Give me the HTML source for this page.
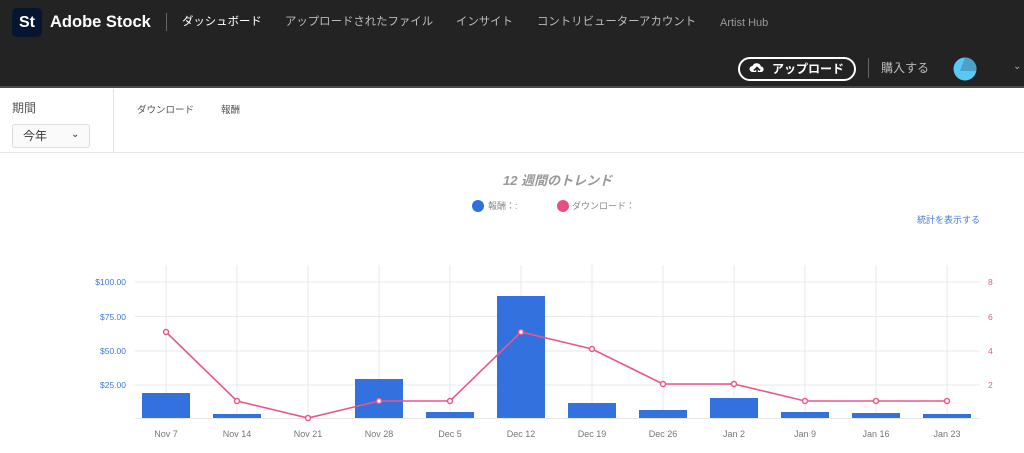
<!DOCTYPE html>
<html><head><meta charset="utf-8">
<style>
*{margin:0;padding:0;box-sizing:border-box}
body{width:1024px;height:453px;background:#fff;font-family:"Liberation Sans","Noto Sans CJK JP",sans-serif;position:relative;overflow:hidden}
.hdr{position:absolute;left:0;top:0;width:1024px;height:88px;background:#232323;border-bottom:2px solid #4a4a4a}
.a{position:absolute;white-space:nowrap}
.n{font-size:11.4px;line-height:18px;top:13px}
</style></head><body>
<div class="hdr">
  <div class="a" style="left:12px;top:8px;width:30px;height:29px;background:#061530;border-radius:5px;color:#fff;font-weight:bold;font-size:16px;line-height:29px;text-align:center">St</div>
  <div class="a" style="left:50px;top:10px;color:#fff;font-weight:bold;font-size:16.5px;line-height:24px">Adobe Stock</div>
  <div class="a" style="left:166px;top:13px;width:1px;height:18px;background:#666"></div>
  <div class="a n" style="left:182px;color:#fff">ダッシュボード</div>
  <div class="a n" style="left:285px;color:#bbb">アップロードされたファイル</div>
  <div class="a n" style="left:456px;color:#bbb">インサイト</div>
  <div class="a n" style="left:537px;color:#bbb">コントリビューターアカウント</div>
  <div class="a" style="left:720px;top:14px;color:#999;font-size:11px;line-height:18px">Artist Hub</div>
  <div class="a" style="left:738px;top:57px;width:118px;height:24px;border:2px solid #fff;border-radius:12px;color:#fff;font-weight:bold;font-size:12px;line-height:20px;padding-left:32px">アップロード</div>
  <svg class="a" style="left:749px;top:62px" width="16" height="14" viewBox="0 0 16 14"><path d="M4 10H3.5A3 3 0 0 1 3.5 4 4.5 4.5 0 0 1 12 4.5 2.8 2.8 0 0 1 12.5 10H12" fill="#fff"/><path d="M8 13V6M5 8.5L8 5.5 11 8.5" stroke="#232323" stroke-width="1.6" fill="none"/></svg>
  <div class="a" style="left:868px;top:58px;width:1px;height:20px;background:#666"></div>
  <div class="a" style="left:881px;top:59px;color:#bbb;font-size:12px;line-height:18px">購入する</div>
  <svg class="a" style="left:953px;top:57px" width="24" height="24" viewBox="0 0 24 24"><circle cx="12" cy="12" r="11.5" fill="#5ac8f5"/><path d="M12 .5A11.5 11.5 0 0 1 23.5 12L23 14H7Z" fill="#4aa3c7"/></svg>
  <div class="a" style="left:1013px;top:61px;color:#aaa;font-size:10px">⌄</div>
</div>
<div class="a" style="left:12px;top:99px;color:#555;font-size:12px">期間</div>
<div class="a" style="left:12px;top:124px;width:78px;height:24px;border:1px solid #ddd;border-radius:3px;background:#fafafa;color:#333;font-size:12px;line-height:22px;padding-left:10px">今年<span style="position:absolute;left:58px;top:-1px;font-size:10px">⌄</span></div>
<div class="a" style="left:113px;top:89px;width:1px;height:64px;background:#e3e3e3"></div>
<div class="a" style="left:0;top:152px;width:1024px;height:1px;background:#e6e6e6"></div>
<div class="a" style="left:137px;top:102px;color:#555;font-size:9.5px">ダウンロード</div>
<div class="a" style="left:221px;top:102px;color:#555;font-size:9.5px">報酬</div>
<div class="a" style="left:503px;top:170px;color:#999;font-size:13px;font-style:italic;font-weight:bold">12 週間のトレンド</div>
<div class="a" style="left:472px;top:200px;width:12px;height:12px;border-radius:6px;background:#2f6fde"></div>
<div class="a" style="left:488px;top:199px;color:#888;font-size:9px">報酬：:</div>
<div class="a" style="left:557px;top:200px;width:12px;height:12px;border-radius:6px;background:#e84e86"></div>
<div class="a" style="left:572px;top:199px;color:#888;font-size:9px">ダウンロード：</div>
<div class="a" style="left:917px;top:213px;color:#3d7ad6;font-size:9px">統計を表示する</div>
<svg class="a" style="left:0;top:0" width="1024" height="453" viewBox="0 0 1024 453" font-family="Liberation Sans,sans-serif">
<g stroke="#e8e8e8" stroke-width="1">
<line x1="135" y1="282" x2="980" y2="282"/><line x1="135" y1="316.5" x2="980" y2="316.5"/><line x1="135" y1="351" x2="980" y2="351"/><line x1="135" y1="385" x2="980" y2="385"/><line x1="135" y1="418.5" x2="980" y2="418.5"/>
<line x1="166" y1="265" x2="166" y2="418"/><line x1="237" y1="265" x2="237" y2="418"/><line x1="308" y1="265" x2="308" y2="418"/><line x1="379" y1="265" x2="379" y2="418"/><line x1="450" y1="265" x2="450" y2="418"/><line x1="521" y1="265" x2="521" y2="418"/><line x1="592" y1="265" x2="592" y2="418"/><line x1="663" y1="265" x2="663" y2="418"/><line x1="734" y1="265" x2="734" y2="418"/><line x1="805" y1="265" x2="805" y2="418"/><line x1="876" y1="265" x2="876" y2="418"/><line x1="947" y1="265" x2="947" y2="418"/>
</g>
<g fill="#3371de">
<rect x="142" y="393" width="48" height="25"/><rect x="213" y="414" width="48" height="4"/><rect x="355" y="379" width="48" height="39"/><rect x="426" y="412" width="48" height="6"/><rect x="497" y="296" width="48" height="122"/><rect x="568" y="403" width="48" height="15"/><rect x="639" y="410" width="48" height="8"/><rect x="710" y="398" width="48" height="20"/><rect x="781" y="412" width="48" height="6"/><rect x="852" y="413" width="48" height="5"/><rect x="923" y="414" width="48" height="4"/>
</g>
<polyline fill="none" stroke="#e9578a" stroke-width="1.6" points="166,332 237,401 308,418 379,401 450,401 521,332 592,349 663,384 734,384 805,401 876,401 947,401"/>
<g fill="#fff" stroke="#e9578a" stroke-width="1.5">
<circle cx="166" cy="332" r="2.5"/><circle cx="237" cy="401" r="2.5"/><circle cx="308" cy="418" r="2.5"/><circle cx="379" cy="401" r="2.5"/><circle cx="450" cy="401" r="2.5"/><circle cx="521" cy="332" r="2.5"/><circle cx="592" cy="349" r="2.5"/><circle cx="663" cy="384" r="2.5"/><circle cx="734" cy="384" r="2.5"/><circle cx="805" cy="401" r="2.5"/><circle cx="876" cy="401" r="2.5"/><circle cx="947" cy="401" r="2.5"/>
</g>
<g fill="#3d7ad6" font-size="8.5" text-anchor="end">
<text x="126" y="285">$100.00</text><text x="126" y="320">$75.00</text><text x="126" y="354">$50.00</text><text x="126" y="388">$25.00</text>
</g>
<g fill="#e9578a" font-size="8.5">
<text x="988" y="285">8</text><text x="988" y="320">6</text><text x="988" y="354">4</text><text x="988" y="388">2</text>
</g>
<g fill="#777" font-size="9" text-anchor="middle">
<text x="166" y="437">Nov 7</text><text x="237" y="437">Nov 14</text><text x="308" y="437">Nov 21</text><text x="379" y="437">Nov 28</text><text x="450" y="437">Dec 5</text><text x="521" y="437">Dec 12</text><text x="592" y="437">Dec 19</text><text x="663" y="437">Dec 26</text><text x="734" y="437">Jan 2</text><text x="805" y="437">Jan 9</text><text x="876" y="437">Jan 16</text><text x="947" y="437">Jan 23</text>
</g>
</svg>
</body></html>
